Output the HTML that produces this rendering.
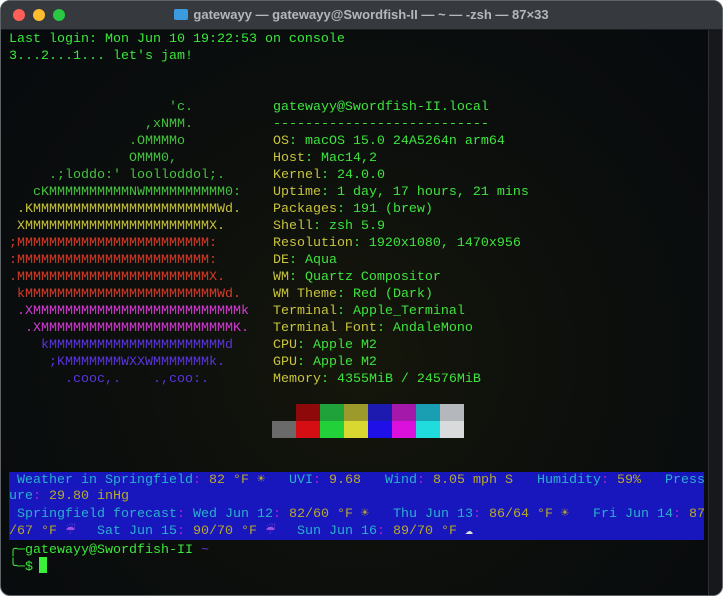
<!DOCTYPE html>
<html><head><meta charset="utf-8"><style>
html,body{margin:0;padding:0;background:#fff;width:723px;height:596px;overflow:hidden}
#win{position:absolute;left:0;top:0;width:721px;height:594px;border:1px solid #5f6266;border-radius:10px;overflow:hidden;background:radial-gradient(ellipse at 50% 60%,#15160b 0%,#0c0f0c 45%,#070a0e 100%)}
#title{position:absolute;left:0;top:0;width:721px;height:28px;background:#36393e;border-bottom:1px solid #1c1d20}
.dot{position:absolute;top:8px;width:12px;height:12px;border-radius:50%}
#ttl{position:absolute;left:0;width:721px;top:6px;text-align:center;font:bold 13px "Liberation Sans",sans-serif;color:#b4b8be}
#ttl i{display:inline-block;width:14px;height:11px;background:#3b9be0;border-radius:2px;vertical-align:-1px;margin-right:5px}
#sb{position:absolute;left:707px;top:29px;width:14px;height:566px;background:#16181b;border-left:1px solid #2c2f33}
.r{position:absolute;left:8px;height:17px;line-height:17px;font:13.33px "Liberation Mono","DejaVu Sans Mono",monospace;white-space:pre;color:#3ae83a}
.g{color:#45c23f}.y{color:#c7c23a}.rd{color:#d83a28}.m{color:#d63ad6}.p{color:#6a34e6}.b{color:#5b34e0}
.l{color:#c9c43c}.v{color:#3ee43e}
.c{color:#2ab0cc}.w{color:#b7a82e}.k{color:#c01ec8}
#wx{position:absolute;left:8px;top:471px;width:695px;height:68px;background:#1717bd}
.blk{position:absolute;width:24px;height:17px}
.u{display:inline-block;width:16px;font-family:"DejaVu Sans",sans-serif;color:#a050e0;font-size:12px}
</style></head><body>
<div id="win">
<div id="title">
<div class="dot" style="left:12px;background:#fe5f57"></div>
<div class="dot" style="left:32px;background:#febc2e"></div>
<div class="dot" style="left:52px;background:#28c840"></div>
<div id="ttl"><i></i>gatewayy — gatewayy@Swordfish-II — ~ — -zsh — 87×33</div>
</div>
<div id="sb"></div>
<div class="r" style="top:31px">Last login: Mon Jun 10 19:22:53 on console</div>
<div class="r" style="top:48px">3...2...1... let's jam!</div>

<div class="r g" style="top:99px">                    'c.          <span class="v">gatewayy@Swordfish-II.local</span></div>
<div class="r g" style="top:116px">                 ,xNMM.          <span class="v">---------------------------</span></div>
<div class="r g" style="top:133px">               .OMMMMo           <span class="l">OS</span><span class="v">: macOS 15.0 24A5264n arm64</span></div>
<div class="r g" style="top:150px">               OMMM0,            <span class="l">Host</span><span class="v">: Mac14,2</span></div>
<div class="r g" style="top:167px">     .;loddo:' loolloddol;.      <span class="l">Kernel</span><span class="v">: 24.0.0</span></div>
<div class="r g" style="top:184px">   cKMMMMMMMMMMNWMMMMMMMMMM0:    <span class="l">Uptime</span><span class="v">: 1 day, 17 hours, 21 mins</span></div>
<div class="r y" style="top:201px"> .KMMMMMMMMMMMMMMMMMMMMMMMWd.    <span class="l">Packages</span><span class="v">: 191 (brew)</span></div>
<div class="r y" style="top:218px"> XMMMMMMMMMMMMMMMMMMMMMMMX.      <span class="l">Shell</span><span class="v">: zsh 5.9</span></div>
<div class="r rd" style="top:235px">;MMMMMMMMMMMMMMMMMMMMMMMM:       <span class="l">Resolution</span><span class="v">: 1920x1080, 1470x956</span></div>
<div class="r rd" style="top:252px">:MMMMMMMMMMMMMMMMMMMMMMMM:       <span class="l">DE</span><span class="v">: Aqua</span></div>
<div class="r rd" style="top:269px">.MMMMMMMMMMMMMMMMMMMMMMMMX.      <span class="l">WM</span><span class="v">: Quartz Compositor</span></div>
<div class="r rd" style="top:286px"> kMMMMMMMMMMMMMMMMMMMMMMMMWd.    <span class="l">WM Theme</span><span class="v">: Red (Dark)</span></div>
<div class="r m" style="top:303px"> .XMMMMMMMMMMMMMMMMMMMMMMMMMMk   <span class="l">Terminal</span><span class="v">: Apple_Terminal</span></div>
<div class="r m" style="top:320px">  .XMMMMMMMMMMMMMMMMMMMMMMMMK.   <span class="l">Terminal Font</span><span class="v">: AndaleMono</span></div>
<div class="r b" style="top:337px">    kMMMMMMMMMMMMMMMMMMMMMMd     <span class="l">CPU</span><span class="v">: Apple M2</span></div>
<div class="r b" style="top:354px">     ;KMMMMMMMWXXWMMMMMMMk.      <span class="l">GPU</span><span class="v">: Apple M2</span></div>
<div class="r b" style="top:371px">       .cooc,.    .,coo:.        <span class="l">Memory</span><span class="v">: 4355MiB / 24576MiB</span></div>

<div class="blk" style="left:295px;top:403px;background:#8e0a0a"></div>
<div class="blk" style="left:319px;top:403px;background:#1fa23a"></div>
<div class="blk" style="left:343px;top:403px;background:#9c9a2a"></div>
<div class="blk" style="left:367px;top:403px;background:#1d1ab0"></div>
<div class="blk" style="left:391px;top:403px;background:#a418aa"></div>
<div class="blk" style="left:415px;top:403px;background:#1a9eb2"></div>
<div class="blk" style="left:439px;top:403px;background:#b4b8bc"></div>
<div class="blk" style="left:271px;top:420px;background:#6a6a6a"></div>
<div class="blk" style="left:295px;top:420px;background:#d40e12"></div>
<div class="blk" style="left:319px;top:420px;background:#22d03a"></div>
<div class="blk" style="left:343px;top:420px;background:#d8d830"></div>
<div class="blk" style="left:367px;top:420px;background:#2010e8"></div>
<div class="blk" style="left:391px;top:420px;background:#dc10dc"></div>
<div class="blk" style="left:415px;top:420px;background:#20dcdc"></div>
<div class="blk" style="left:439px;top:420px;background:#d8dadc"></div>

<div id="wx"></div>
<div class="r c" style="top:471px"> Weather in Springfield<span class="k">:</span> <span class="w">82 °F ☀</span>   UVI<span class="k">:</span> <span class="w">9.68</span>   Wind<span class="k">:</span> <span class="w">8.05 mph S</span>   Humidity<span class="k">:</span> <span class="w">59%</span>   Press</div>
<div class="r c" style="top:488px">ure<span class="k">:</span> <span class="w">29.80 inHg</span></div>
<div class="r c" style="top:505px"> Springfield forecast<span class="k">:</span> Wed Jun 12<span class="k">:</span> <span class="w">82/60 °F ☀</span>   Thu Jun 13<span class="k">:</span> <span class="w">86/64 °F ☀</span>   Fri Jun 14<span class="k">:</span> <span class="w">87</span></div>
<div class="r c" style="top:522px"><span class="w">/67 °F </span><span class="u">☔</span>  Sat Jun 15<span class="k">:</span> <span class="w">90/70 °F </span><span class="u">☔</span>  Sun Jun 16<span class="k">:</span> <span class="w">89/70 °F </span><span style="color:#ddd">☁</span></div>

<div class="r" style="top:541px;color:#3ae83a">╭─gatewayy@Swordfish-II <span style="color:#6a34e6">~</span></div>
<div class="r" style="top:558px;color:#3ae83a">╰─$ </div>
<div style="position:absolute;left:38px;top:556px;width:8px;height:16px;background:#3af03a"></div>
</div>
</body></html>
